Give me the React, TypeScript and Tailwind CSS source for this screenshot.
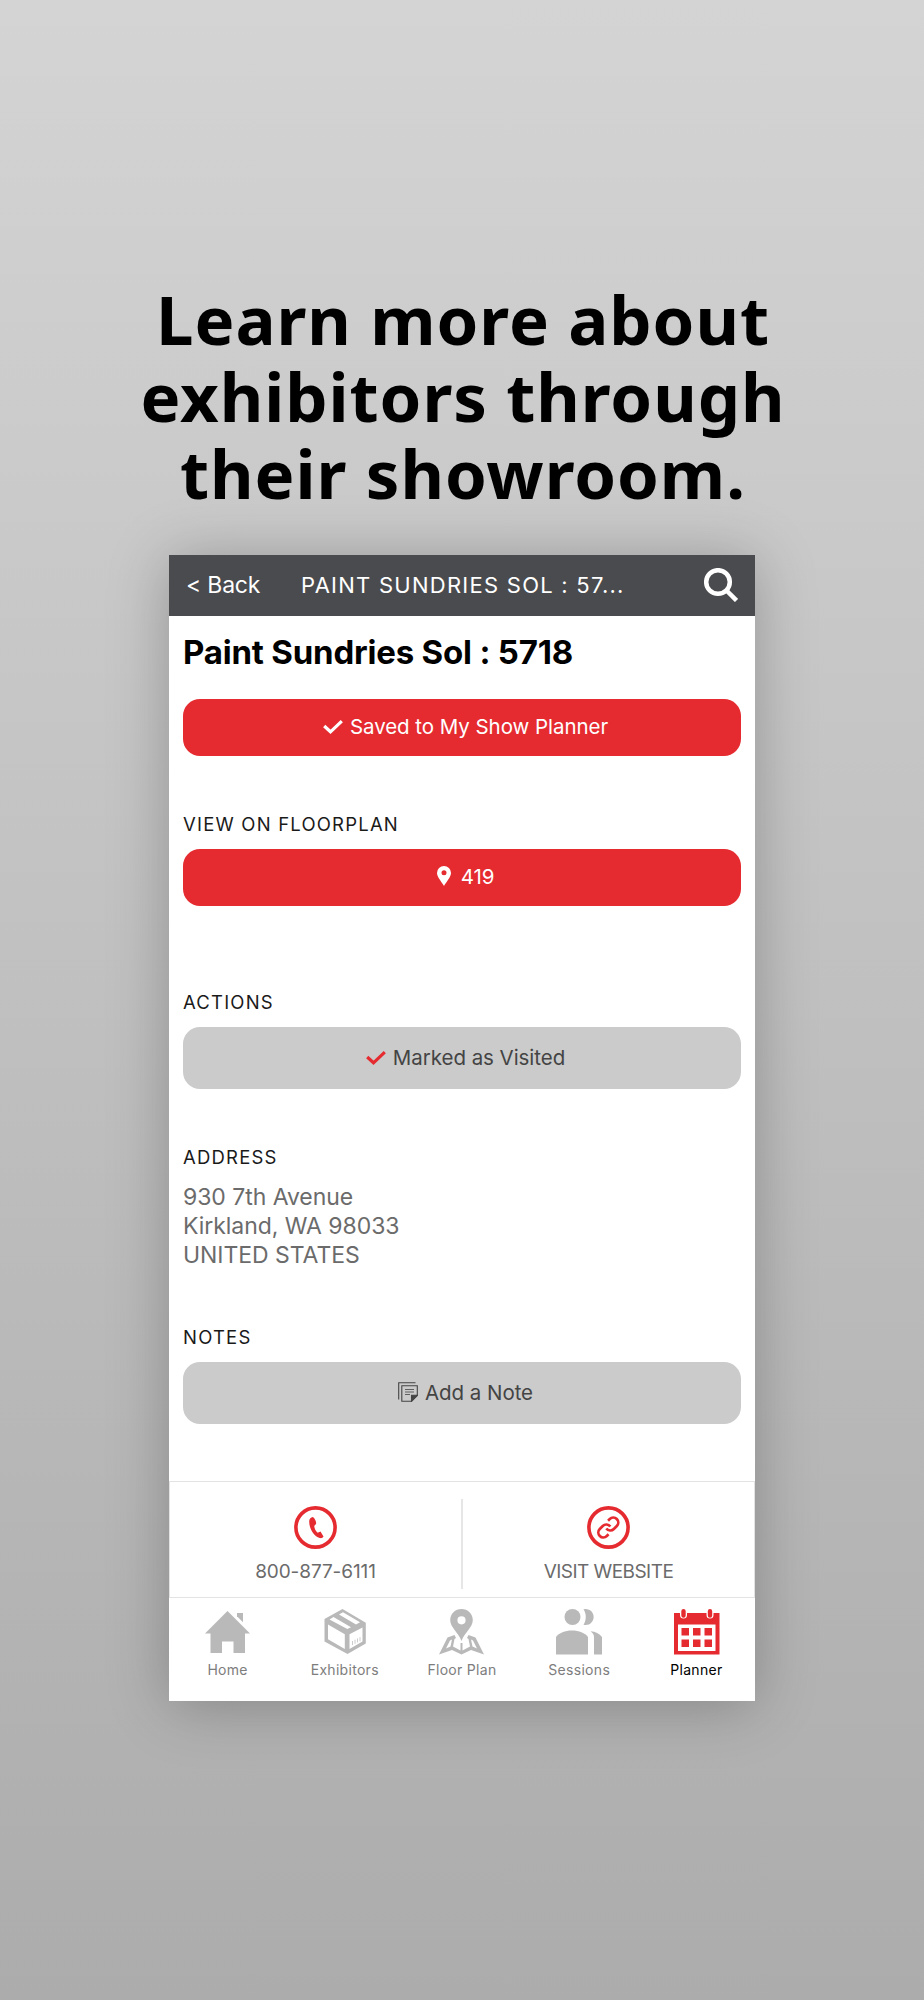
import React from 'react';

interface ButtonProps {
  icon: React.ReactNode;
  label: string;
  className: string;
}

const sectionTitle = 'text-[18.5px] leading-[24px] tracking-[1.2px] text-[#1a1a1a]';

const BarButton: React.FC<ButtonProps> = ({ icon, label, className }) => (
  <button className={`flex w-full items-center justify-center rounded-[17px] pl-[7px] text-[20.5px] tracking-[-0.05px] ${className}`}>
    {icon}
    <span>{label}</span>
  </button>
);

const CheckIcon: React.FC<{ className: string }> = ({ className }) => (
  <svg viewBox="0 0 20 15" className={`h-[15px] w-[20px] ${className}`} fill="none" stroke="currentColor" strokeWidth="3.2">
    <path d="M1.2 6 7.5 11.8 18.8 1.2" />
  </svg>
);

const PinIcon: React.FC = () => (
  <svg viewBox="0 0 14 20" className="mr-[10px] mb-[3px] h-[20px] w-[14px]" fill="currentColor">
    <path fillRule="evenodd" d="M7 0a7 7 0 0 1 7 7c0 4-4.5 8.5-7 13C4.5 15.5 0 11 0 7a7 7 0 0 1 7-7Zm0 4.2a2.5 2.5 0 1 0 0 5 2.5 2.5 0 0 0 0-5Z" />
  </svg>
);

const NoteIcon: React.FC = () => (
  <svg viewBox="0 0 20 20" className="mr-[7px] mb-[2px] h-[20px] w-[20px]" fill="none" stroke="currentColor" strokeWidth="1.1">
    <path d="M.7 17.5V.8H17.5" />
    <path d="M3.8 3.8h15.5v9.7l-5.700 5.7H3.8Z" />
    <path d="M19.3 13.3h-5.800v5.9Z" fill="currentColor" />
    <path d="M7 7.5h9M7 10h9M7 12.500h5" strokeWidth="0.8" />
  </svg>
);

const HomeIcon: React.FC = () => (
  <svg viewBox="0 0 46 46" className="h-[46px] w-[46px]" fill="currentColor">
    <path d="M22.5 2 45 24.5h-5V44H28.5V32.5H17V44H5.5V24.5H0Z" />
    <path d="M32 4h6v9.2l-6-6Z" />
  </svg>
);

const BoxIcon: React.FC = () => (
  <svg viewBox="0 0 46 46" className="h-[46px] w-[46px]" fill="currentColor">
    <path
      fillRule="evenodd"
      d="M20.5 0 43.8 13.7V34.5L25.5 45 2.5 32.5V10ZM6 15.5V30.3L22.8 40V25.3ZM27.5 25.3V40L40.5 32.5V18.5ZM7.5 10.5 25.3 20 29 18.2 11.5 8ZM17 5.5 34 15.5 38 13.3 21 3.3Z"
    />
    <path d="M30.5 32v4M33 30.7v4M35.500 29.400v4M38 28.200v4" stroke="currentColor" strokeWidth="1" opacity="0.7" />
  </svg>
);

const MapIcon: React.FC = () => (
  <svg viewBox="0 0 46 46" className="h-[46px] w-[46px]" fill="currentColor">
    <path fillRule="evenodd" d="M22.5 0c6.3 0 11.3 4.9 11.3 11 0 7.5-8 12-11.3 21-3.3-9-11.3-13.5-11.3-21 0-6.100 5-11 11.3-11Zm0 7.2a4.1 4.1 0 1 0 0 8.2 4.1 4.1 0 0 0 0-8.2Z" />
    <path
      fillRule="evenodd"
      d="M0 45.5 8.5 28.5 15.5 26 17 29 15.500 30 14 37.500 21.500 41.500V34h2v7.500L31 37.500 29.500 30 28 29 29.500 26 36.500 28.500 45 45.500 32 41 22.500 45.500 13 41ZM7 39.500 11.500 37.500 13 30.500 11 31.500ZM38 39.500 34 31.500 32 30.500 33.500 37.500Z"
    />
  </svg>
);

const PeopleIcon: React.FC = () => (
  <svg viewBox="0 0 46 46" className="h-[46px] w-[46px]" fill="currentColor">
    <circle cx="16.5" cy="8" r="8" />
    <path d="M0 45.5V28c3-4 9-6.500 16-6.500S29 24 32 28v17.500Z" />
    <path d="M27.5.3a8 8 0 1 1 0 15.4c3-4.500 3-11 0-15.4Z" />
    <path d="M34.5 22.3c5 .3 9 2.200 11.500 5.700v17.500h-8V28c0-2.200-1.500-4.200-3.500-5.700Z" />
  </svg>
);

const CalendarIcon: React.FC = () => (
  <svg viewBox="0 0 46 46" className="ml-[2px] h-[46px] w-[46px]" fill="currentColor">
    <path fillRule="evenodd" d="M0 4h45.5v41.5H0Zm4 11.5V42h37.5V15.5Z" />
    <path d="M7.5 19H15v7.5H7.5ZM19 19h7.5v7.5H19ZM30.5 19h7.5v7.5h-7.5ZM7.5 30.5H15V38H7.5ZM19 30.5h7.5V38H19ZM30.5 30.5h7.5V38h-7.5Z" />
    <path d="M9.5 2.5V6M36 2.5V6" stroke="#fff" strokeWidth="7" strokeLinecap="round" />
    <path d="M9.5 2.2V6.5M36 2.2V6.5" stroke="currentColor" strokeWidth="4.4" strokeLinecap="round" />
  </svg>
);

const tabs = [
  { icon: <HomeIcon />, label: 'Home' },
  { icon: <BoxIcon />, label: 'Exhibitors' },
  { icon: <MapIcon />, label: 'Floor Plan' },
  { icon: <PeopleIcon />, label: 'Sessions' },
  { icon: <CalendarIcon />, label: 'Planner', active: true },
];

const App: React.FC = () => (
  <div className="flex h-[2000px] w-[924px] flex-col items-center bg-linear-to-b from-[#d4d4d4] to-[#acacac] font-[Inter,sans-serif]">
    <h1 className="mt-[281px] pl-[2px] text-center font-['Noto_Sans',sans-serif] text-[67px] leading-[77px] font-bold tracking-[0.95px] whitespace-nowrap text-black">
      Learn more about
      <br />
      exhibitors through
      <br />
      their showroom.
    </h1>

    <div className="mt-[43px] flex h-[1146px] w-[586px] flex-col bg-white shadow-[0_4px_56px_rgba(0,0,0,0.26)]">
      <header className="flex h-[61px] shrink-0 items-center bg-[#4a4b4e] text-white">
        <span className="ml-[17px] w-[115px] text-[23px] tracking-[-0.2px]">&lt; Back</span>
        <span className="text-[22px] tracking-[1.25px]">PAINT SUNDRIES SOL : 57...</span>
        <svg viewBox="0 0 34 34" className="mr-[17px] mb-[2px] ml-auto h-[34px] w-[34px]" fill="none" stroke="currentColor" strokeWidth="4.5">
          <circle cx="14" cy="14" r="11.8" />
          <path d="m22 22 10.5 10.5" />
        </svg>
      </header>

      <main className="flex flex-col px-[14px]">
        <h2 className="mt-[16px] text-[33px] leading-[40px] font-bold tracking-[-0.2px] text-black">Paint Sundries Sol : 5718</h2>
        <BarButton className="mt-[27px] h-[57px] bg-[#e52b30] text-white" icon={<CheckIcon className="mr-[7px]" />} label="Saved to My Show Planner" />

        <h3 className={`mt-[56px] ${sectionTitle}`}>VIEW ON FLOORPLAN</h3>
        <BarButton className="mt-[13px] h-[57px] bg-[#e52b30] text-white" icon={<PinIcon />} label="419" />

        <h3 className={`mt-[84px] ${sectionTitle}`}>ACTIONS</h3>
        <BarButton className="mt-[13px] h-[62px] bg-[#cbcbcb] text-[#444]" icon={<CheckIcon className="mr-[7px] text-[#e52b30]" />} label="Marked as Visited" />

        <h3 className={`mt-[56px] ${sectionTitle}`}>ADDRESS</h3>
        <p className="mt-[14px] text-[23px] leading-[29px] tracking-[-0.05px] text-[#6b6b6b]">
          930 7th Avenue
          <br />
          Kirkland, WA 98033
          <br />
          UNITED STATES
        </p>

        <h3 className={`mt-[55px] ${sectionTitle}`}>NOTES</h3>
        <BarButton className="mt-[13px] h-[62px] bg-[#cbcbcb] text-[#444]" icon={<NoteIcon />} label="Add a Note" />
      </main>

      <div className="mt-auto flex h-[117px] shrink-0 border border-[#e3e3e3] text-[19px] text-[#6b6b6b]">
        <div className="flex flex-1 flex-col items-center pt-[24px]">
          <svg viewBox="0 0 43 43" className="h-[43px] w-[43px] text-[#e52b30]" fill="none" stroke="currentColor">
            <circle cx="21.5" cy="21.5" r="19.6" strokeWidth="3.6" />
            <path d="M19 11c-2.5.3-3.8 2-3.8 4.5 0 7.500 5 15 10.500 16.500 1.500.4 3 0 3.800-1.500l-3-5-2.800 1.300c-1.800-1.500-3.200-4-3.500-6.800l2-2.200c0-2.500-1-5-3.200-6.800Z" fill="currentColor" stroke="none" />
          </svg>
          <span className="mt-[11px] leading-[24px] tracking-[-0.1px]">800-877-6111</span>
        </div>
        <div className="mt-[17px] h-[90px] w-[2px] bg-[#e6e6e6]" />
        <div className="flex flex-1 flex-col items-center pt-[24px]">
          <svg viewBox="0 0 43 43" className="h-[43px] w-[43px] text-[#e52b30]" fill="none" stroke="currentColor">
            <circle cx="21.5" cy="21.5" r="19.6" strokeWidth="3.6" />
            <g transform="translate(9.3 9.5)" strokeWidth="2.7">
              <path d="M10 13a5 5 0 0 0 7.54.54l3-3a5 5 0 0 0-7.07-7.07l-1.72 1.71" />
              <path d="M14 11a5 5 0 0 0-7.54-.54l-3 3a5 5 0 0 0 7.07 7.07l1.71-1.71" />
            </g>
          </svg>
          <span className="mt-[11px] leading-[24px] tracking-[-0.55px]">VISIT WEBSITE</span>
        </div>
      </div>

      <nav className="grid h-[103px] shrink-0 grid-cols-5">
        {tabs.map((tab) => (
          <div key={tab.label} className={`flex flex-col items-center pt-[11px] ${tab.active ? 'text-[#e52b30]' : 'text-[#b9b9b9]'}`}>
            {tab.icon}
            <span className={`mt-[5px] text-[14px] leading-[20px] tracking-[0.3px] ${tab.active ? 'text-black' : 'text-[#7d7d7d]'}`}>{tab.label}</span>
          </div>
        ))}
      </nav>
    </div>
  </div>
);

export default App;
